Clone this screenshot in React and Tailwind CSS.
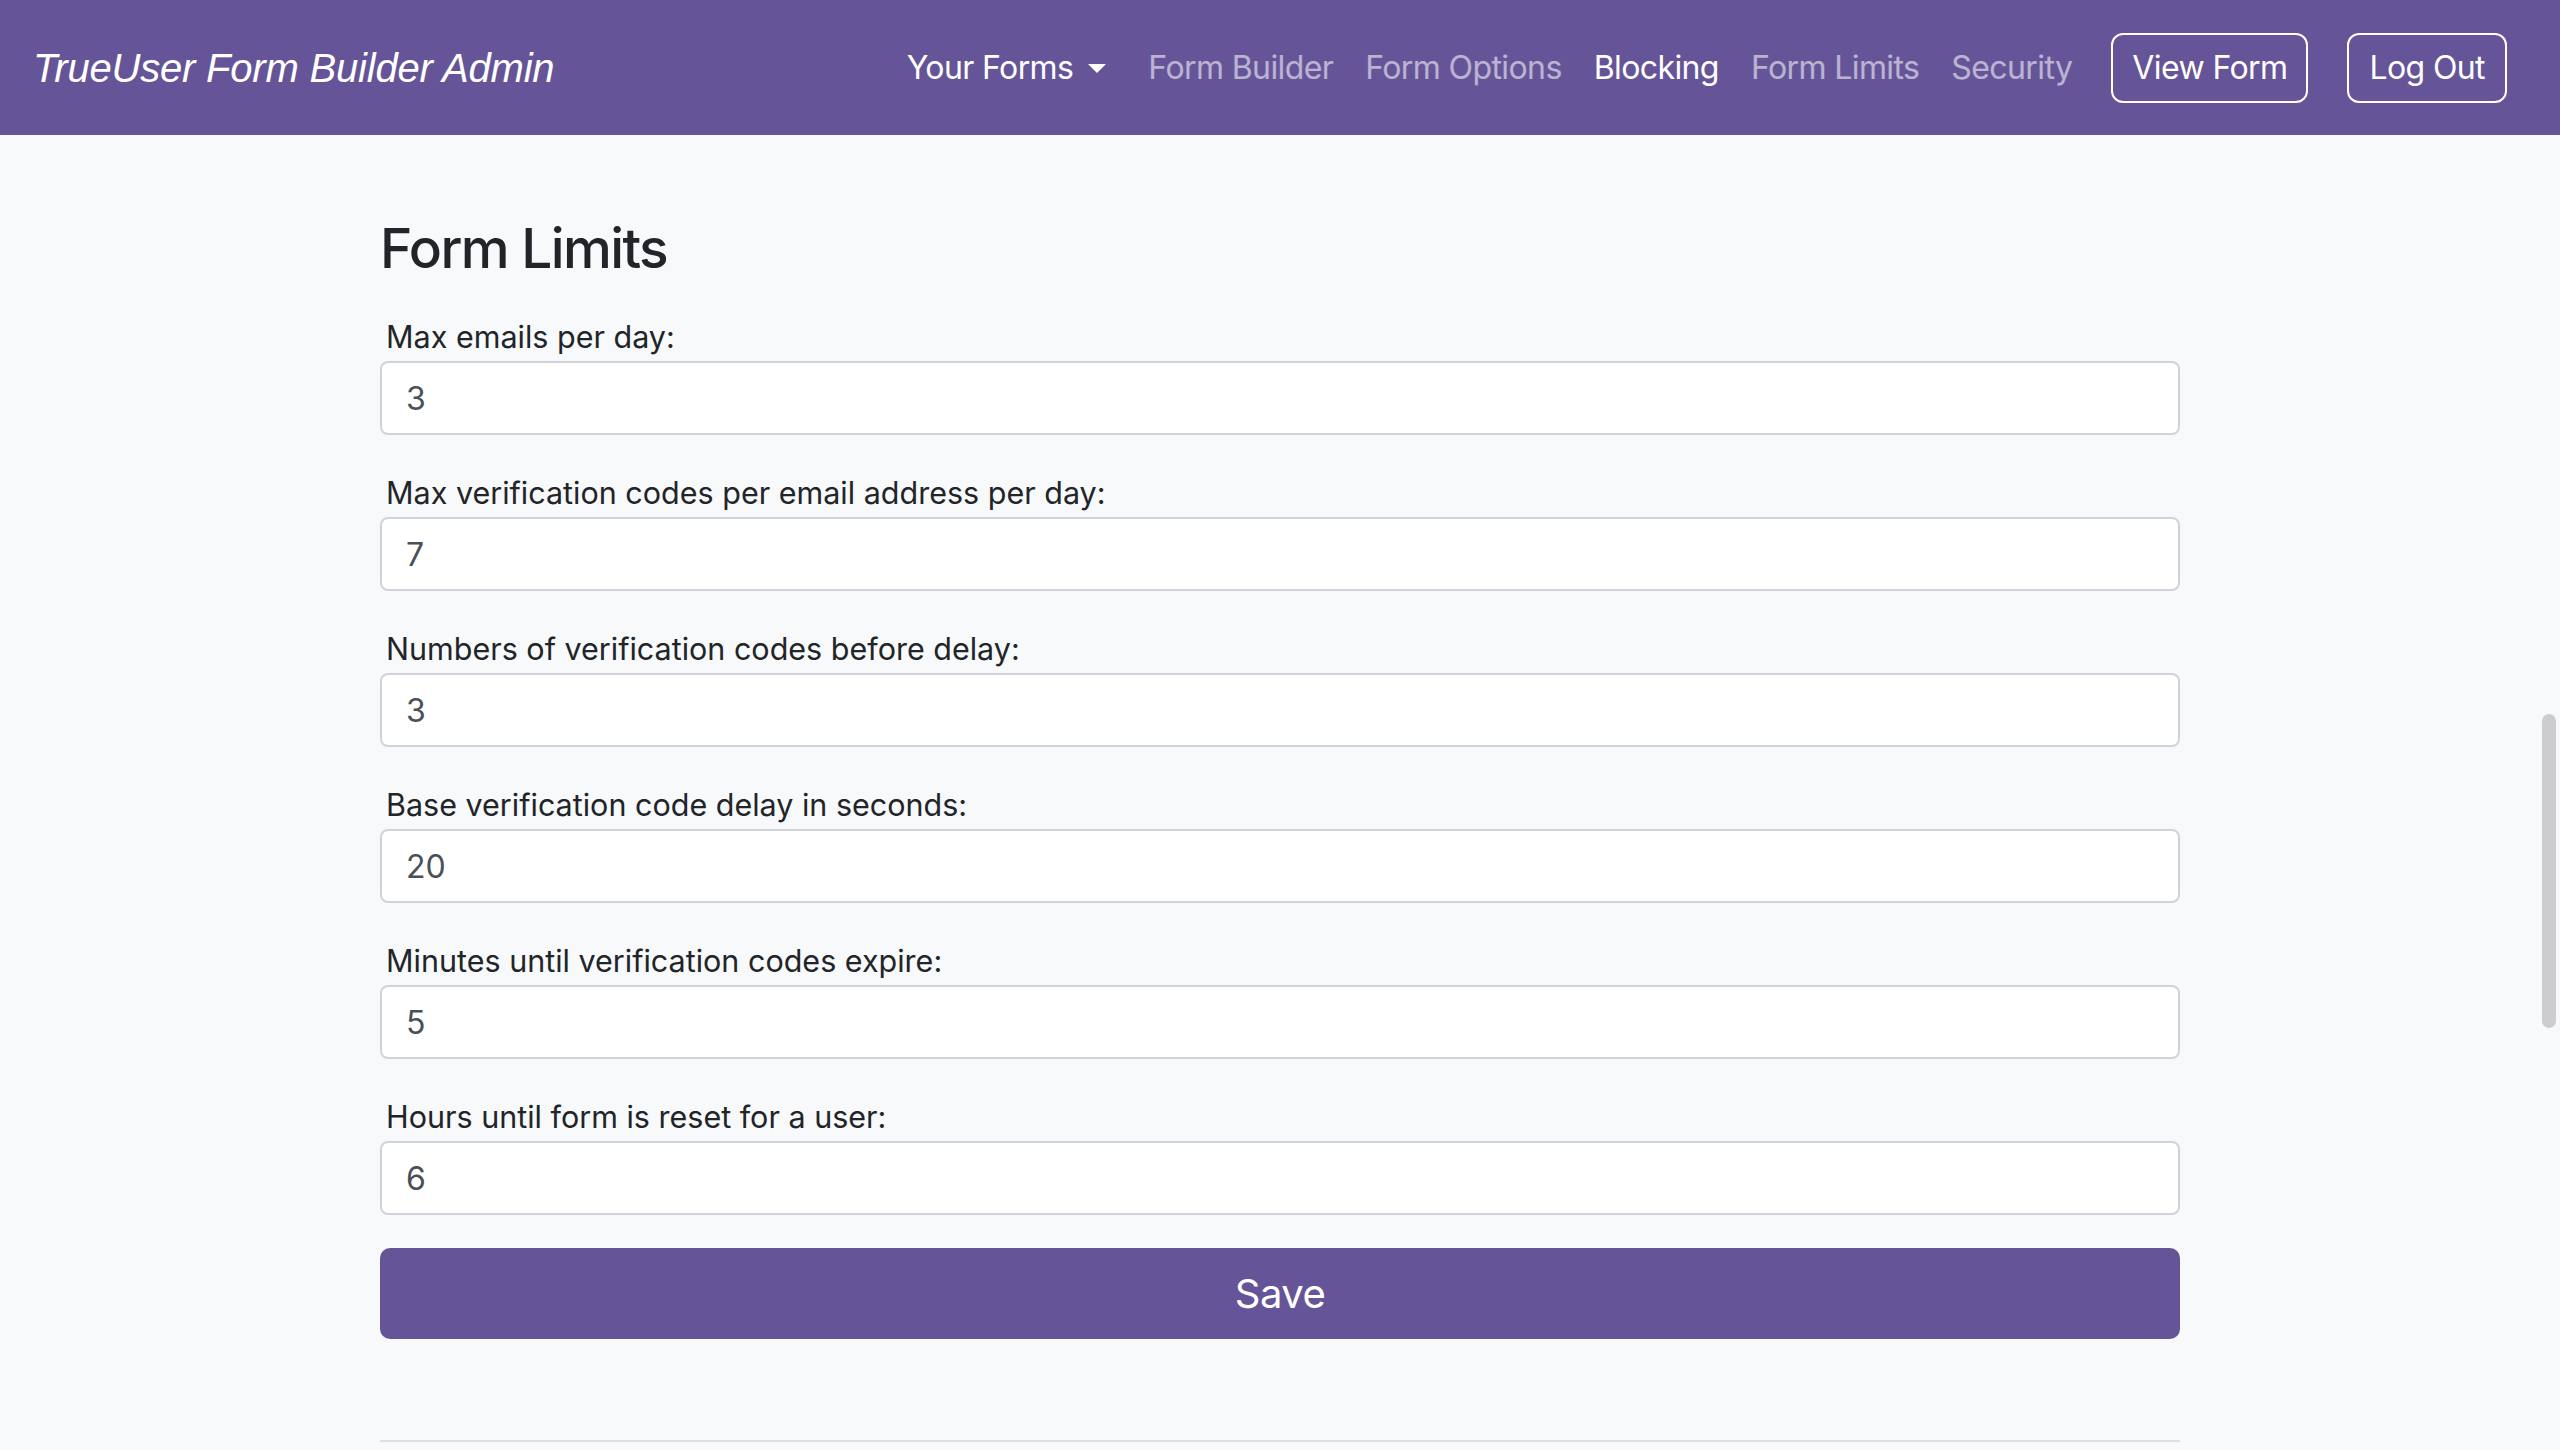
import React, { useState } from 'react'

const navLinks = [
  { label: 'Form Builder', active: false },
  { label: 'Form Options', active: false },
  { label: 'Blocking', active: true },
  { label: 'Form Limits', active: false },
  { label: 'Security', active: false },
]

const fields = [
  { id: 'maxEmails', label: 'Max emails per day:', value: '3' },
  { id: 'maxCodes', label: 'Max verification codes per email address per day:', value: '7' },
  { id: 'codesBeforeDelay', label: 'Numbers of verification codes before delay:', value: '3' },
  { id: 'baseDelay', label: 'Base verification code delay in seconds:', value: '20' },
  { id: 'expireMinutes', label: 'Minutes until verification codes expire:', value: '5' },
  { id: 'resetHours', label: 'Hours until form is reset for a user:', value: '6' },
]

function Navbar() {
  return (
    <nav className="h-[135px] bg-[#655598] flex items-center pl-[33px] pr-[53px]">
      <a className="text-white italic text-[40px] font-['Liberation_Sans',Arial,sans-serif] tracking-[-0.2px]">
        TrueUser Form Builder Admin
      </a>
      <ul className="ml-auto flex items-center text-[32px] leading-[48px] tracking-[-0.6px]">
        <li className="px-4 flex items-center text-white">
          Your Forms
          <span className="ml-[15px] mr-[10px] mt-[2px] inline-block w-0 h-0 border-t-[9px] border-t-white border-x-[9.5px] border-x-transparent" />
        </li>
        {navLinks.map(link => (
          <li
            key={link.label}
            className={`px-4 ${link.active ? 'text-white' : 'text-white/55'}`}
          >
            {link.label}
          </li>
        ))}
      </ul>
      <div className="flex items-center gap-[39px] ml-[23px] tracking-[-0.6px]">
        <button className="h-[70px] px-[19px] border-2 border-white rounded-[12px] text-white text-[32px]">
          View Form
        </button>
        <button className="h-[70px] px-[20px] border-2 border-white rounded-[12px] text-white text-[32px]">
          Log Out
        </button>
      </div>
    </nav>
  )
}

export default function App() {
  const [values, setValues] = useState(
    Object.fromEntries(fields.map(f => [f.id, f.value]))
  )

  return (
    <div className="relative h-[1450px] overflow-hidden bg-[#f8f9fa] font-['Inter',sans-serif] text-[#212529]">
      <Navbar />

      <main className="mx-auto w-[1800px] pt-[80px]">
        <h2 className="text-[55px] font-medium leading-[67px] tracking-[-1.6px] mb-[37px]">Form Limits</h2>

        <form onSubmit={e => e.preventDefault()}>
          {fields.map((f, i) => (
            <div key={f.id} className={i === fields.length - 1 ? 'mb-[33px]' : 'mb-[40px]'}>
              <label htmlFor={f.id} className="block pl-[6px] pb-[6px] text-[30.5px] leading-[36px]">
                {f.label}
              </label>
              <input
                id={f.id}
                type="text"
                value={values[f.id]}
                onChange={e => setValues(prev => ({ ...prev, [f.id]: e.target.value }))}
                className="block w-full h-[74px] bg-white border-2 border-[#ced4da] rounded-[8px] px-[24px] text-[32px] text-[#495057] outline-none"
              />
            </div>
          ))}

          <button
            type="submit"
            className="w-full h-[91px] bg-[#655598] rounded-[10px] text-white text-[40px] tracking-[-0.5px]"
          >
            Save
          </button>
        </form>

        <div className="mt-[101px] h-[2px] bg-[#dedfe2]" />
      </main>

      {/* overlay scrollbar thumb */}
      <div className="absolute right-[4px] top-[714px] w-[14px] h-[314px] rounded-full bg-[#cdcdcf]" />
    </div>
  )
}
